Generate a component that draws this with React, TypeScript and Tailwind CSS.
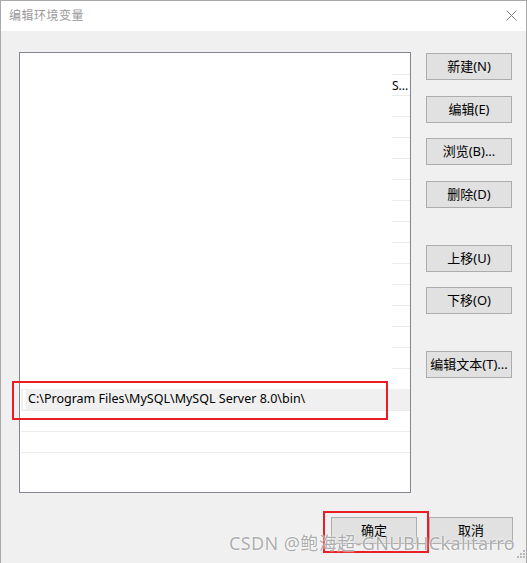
import React from 'react'

const uiFont = 'font-["Noto_Sans","Noto_Sans_CJK_SC",sans-serif]'

function WinButton({ label, className = '' }: { label: string; className?: string }) {
  return (
    <button
      className={`h-[27px] bg-[#e1e1e1] border border-[#adadad] text-[13px] leading-none text-black flex items-center justify-center ${className}`}
    >
      {label}
    </button>
  )
}

export default function App() {
  // rows above the selected path: only the right edge of each separator is visible
  const partialRows = Array.from({ length: 15 }, (_, i) => i)

  return (
    <div className={`relative w-[527px] h-[563px] overflow-hidden bg-[#f0f0f0] border-l border-t border-r border-[#a9a9a9] ${uiFont}`}>
      {/* title bar */}
      <div className="h-[30px] bg-white flex items-center justify-between pl-[8px] pr-[9px]">
        <span className="text-[12px] text-[#9a9a9a] tracking-[0.5px]">编辑环境变量</span>
        <svg width="11" height="11" viewBox="0 0 11 11" className="mt-[-2px]">
          <path d="M0.5 0.5L10.5 10.5M10.5 0.5L0.5 10.5" stroke="#808080" strokeWidth="1" />
        </svg>
      </div>

      <div className="pt-[21px] pl-[18px] flex flex-col">
        <div className="flex gap-[15px]">
          {/* path list */}
          <div className="w-[392px] h-[441px] border border-[#828790] bg-white overflow-hidden">
            <div className="h-[21px]" />
            {partialRows.map((i) => (
              <div key={i} className="h-[21px] flex justify-end">
                <div className="w-[18px] h-full border-t border-[#ececec] flex items-center">
                  {i === 0 && <span className="text-[12px] text-black leading-none mt-[1px]">S...</span>}
                </div>
              </div>
            ))}
            <div className="h-[21px] ml-[1px] bg-[#f0f0f0] flex items-center">
              <div className="w-[3px] h-[19px] bg-white ml-[2px]" />
              <span className="pl-[2px] text-[12.5px] text-black leading-none">
                C:\Program Files\MySQL\MySQL Server 8.0\bin\
              </span>
            </div>
            {[0, 1, 2].map((i) => (
              <div key={i} className="h-[21px] ml-[1px] border-t border-[#ececec]" />
            ))}
          </div>

          {/* right buttons */}
          <div className="flex flex-col w-[86px]">
            <WinButton label="新建(N)" className="mt-[1px]" />
            <WinButton label="编辑(E)" className="mt-[16px]" />
            <WinButton label="浏览(B)..." className="mt-[15px]" />
            <WinButton label="删除(D)" className="mt-[16px]" />
            <WinButton label="上移(U)" className="mt-[37px]" />
            <WinButton label="下移(O)" className="mt-[15px]" />
            <WinButton label="编辑文本(T)..." className="mt-[37px]" />
          </div>
        </div>

        {/* bottom buttons */}
        <div className="flex justify-end gap-[12px] mt-[24px] pr-[13px]">
          <WinButton label="确定" className="w-[86px]" />
          <WinButton label="取消" className="w-[84px]" />
        </div>
      </div>

      {/* red highlight marks */}
      <div className="absolute left-[11px] top-[380px] w-[376px] h-[39px] border-2 border-[#ea1c24]" />
      <div className="absolute left-[322px] top-[510px] w-[106px] h-[42px] border-2 border-[#ea1c24]" />

      {/* watermark */}
      <div className="absolute left-[228px] top-[533px] text-[18px] tracking-[0.4px] leading-none text-[rgba(90,90,90,0.5)] [text-shadow:0_0_2px_#fff,0_0_1px_#fff] whitespace-nowrap">
        CSDN @鲍海超-GNUBHCkalitarro
      </div>

      {/* resize grip */}
      <svg width="10" height="10" viewBox="0 0 10 10" className="absolute left-[515px] top-[548px]">
        <rect x="7" y="1" width="2" height="2" fill="#b8b8b8" />
        <rect x="4" y="4" width="2" height="2" fill="#b8b8b8" />
        <rect x="7" y="4" width="2" height="2" fill="#b8b8b8" />
        <rect x="1" y="7" width="2" height="2" fill="#b8b8b8" />
        <rect x="4" y="7" width="2" height="2" fill="#b8b8b8" />
        <rect x="7" y="7" width="2" height="2" fill="#b8b8b8" />
      </svg>
    </div>
  )
}
